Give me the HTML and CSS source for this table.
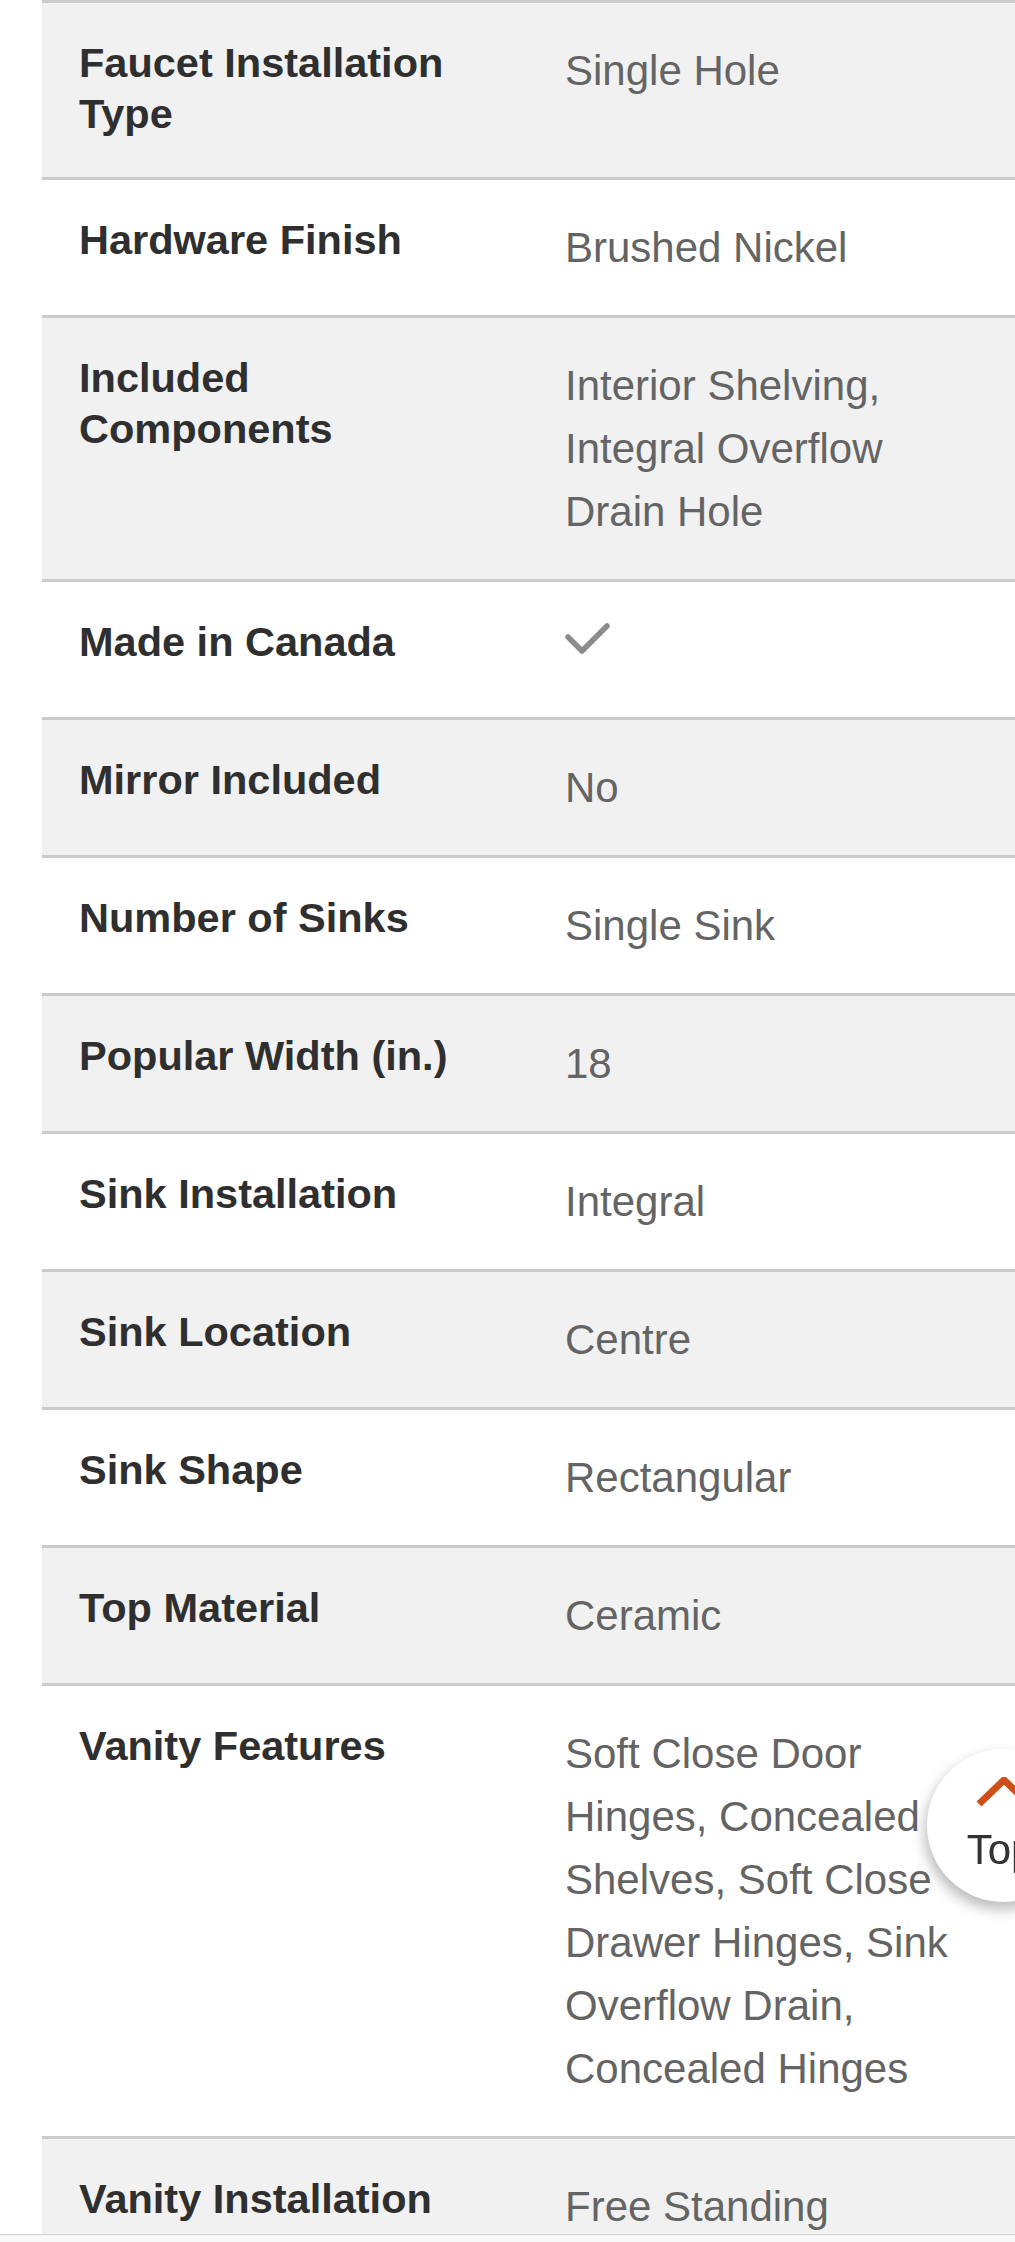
FILE: index.html
```html
<!DOCTYPE html>
<html lang="en">
<head>
<meta charset="utf-8">
<title>Specifications</title>
<link rel="stylesheet" href="styles.css">
</head>
<body>
<div class="specs">
  <div class="row alt"><div class="label">Faucet Installation Type</div><div class="value">Single Hole</div></div>
  <div class="row"><div class="label">Hardware Finish</div><div class="value">Brushed Nickel</div></div>
  <div class="row alt"><div class="label">Included Components</div><div class="value">Interior Shelving, Integral Overflow Drain Hole</div></div>
  <div class="row"><div class="label">Made in Canada</div><div class="value">
    <svg class="check" width="48" height="63" viewBox="0 0 48 63" aria-hidden="true"><path d="M3 19 L17 33 L42 8" fill="none" stroke="#8c8c8c" stroke-width="5.5" stroke-linecap="round" stroke-linejoin="round"/></svg>
  </div></div>
  <div class="row alt"><div class="label">Mirror Included</div><div class="value">No</div></div>
  <div class="row"><div class="label">Number of Sinks</div><div class="value">Single Sink</div></div>
  <div class="row alt"><div class="label">Popular Width (in.)</div><div class="value">18</div></div>
  <div class="row"><div class="label">Sink Installation</div><div class="value">Integral</div></div>
  <div class="row alt"><div class="label">Sink Location</div><div class="value">Centre</div></div>
  <div class="row"><div class="label">Sink Shape</div><div class="value">Rectangular</div></div>
  <div class="row alt"><div class="label">Top Material</div><div class="value">Ceramic</div></div>
  <div class="row"><div class="label">Vanity Features</div><div class="value">Soft Close Door Hinges, Concealed Shelves, Soft Close Drawer Hinges, Sink Overflow Drain, Concealed Hinges</div></div>
  <div class="row alt"><div class="label">Vanity Installation Type</div><div class="value">Free Standing</div></div>
</div>

<a class="top-btn" href="#">
  <svg class="top-chevron" width="60" height="30" viewBox="0 0 60 30" aria-hidden="true"><path d="M5 27 L30 3 L55 27" fill="none" stroke="#d04e17" stroke-width="7"/></svg>
  <span class="top-text">Top</span>
</a>

<div class="bottom-bar"></div>
</body>
</html>
```

FILE: styles.css
```css
html, body {
  margin: 0;
  padding: 0;
  background: #ffffff;
  overflow: hidden;
}

body {
  font-family: "Liberation Sans", Arial, Helvetica, sans-serif;
}

.specs {
  margin-left: 42px;
  display: flex;
  flex-direction: column;
}

.row {
  display: grid;
  grid-template-columns: 523px 1fr;
  border-top: 3px solid #cbcbcb;
  background: #ffffff;
}

.row.alt {
  background: #f1f1f1;
}

.label {
  padding: 34px 86px 38px 37px;
  font-size: 41.5px;
  line-height: 51px;
  font-weight: bold;
  color: #2f2f2f;
}

.value {
  padding: 36px 40px 36px 0;
  font-size: 42px;
  line-height: 63px;
  color: #646464;
}

.check {
  display: block;
}

.top-btn {
  position: fixed;
  left: 927px;
  top: 1749px;
  width: 153px;
  height: 153px;
  border-radius: 50%;
  background: #ffffff;
  box-shadow: -2px 7px 14px rgba(0, 0, 0, 0.28);
  display: flex;
  flex-direction: column;
  align-items: center;
  text-decoration: none;
}

.top-chevron {
  display: block;
  margin-top: 28px;
  flex-shrink: 0;
}

.top-text {
  display: block;
  margin-top: 22px;
  margin-right: 6px;
  font-size: 42px;
  line-height: 42px;
  color: #333333;
  white-space: nowrap;
}

.bottom-bar {
  position: fixed;
  left: 0;
  right: 0;
  bottom: 0;
  height: 7px;
  border-top: 1px solid #cfcfcf;
  background: #f8f8f8;
}
```
